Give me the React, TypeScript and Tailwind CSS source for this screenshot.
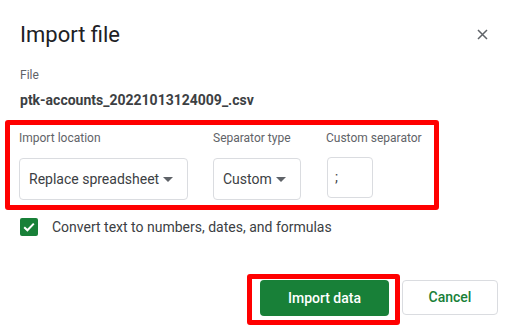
import React from "react";

const Caret: React.FC = () => (
  <svg width="10" height="5" viewBox="0 0 10 5" className="shrink-0">
    <path d="M0 0h10L5 5z" fill="#5f6368" />
  </svg>
);

const Field: React.FC<{ label: string; children: React.ReactNode }> = ({ label, children }) => (
  <div className="flex flex-col">
    <span className="text-[12px] leading-4 text-[#5f6368] whitespace-nowrap">{label}</span>
    <div className="mt-[12px]">{children}</div>
  </div>
);

const App: React.FC = () => {
  return (
    <div className="w-[524px] h-[336px] bg-white overflow-hidden font-['Roboto',sans-serif] flex flex-col">
      {/* header */}
      <div className="flex items-start justify-between pl-5 pr-[36px] pt-[21px]">
        <h1 className="text-[22px] leading-7 text-[#202124]">Import file</h1>
        <svg width="11" height="11" viewBox="0 0 11 11" className="mt-[8px]">
          <path d="M1 1l9 9M10 1l-9 9" stroke="#5f6368" strokeWidth="1.5" />
        </svg>
      </div>

      <div className="pl-5 mt-[18px] text-[12px] leading-4 text-[#5f6368]">File</div>
      <div className="pl-5 mt-[7px] text-[14px] leading-5 font-bold text-[#3c4043]">
        ptk-accounts_20221013124009_.csv
      </div>

      {/* import options */}
      <div className="ml-[5px] mt-[10px] w-[434px] h-[90px] border-[5px] border-[#ff0000] rounded-[3px] flex gap-[25px] pl-[9px] pt-[5px]">
        <Field label="Import location">
          <div className="w-[169px] h-[42px] border border-[#dadce0] rounded-[4px] flex items-center justify-between pl-[9px] pr-[14px] text-[14px] text-[#3c4043] whitespace-nowrap">
            <span>Replace spreadsheet</span>
            <Caret />
          </div>
        </Field>
        <Field label="Separator type">
          <div className="w-[88px] h-[42px] border border-[#dadce0] rounded-[4px] flex items-center justify-between pl-[9px] pr-[14px] text-[14px] text-[#3c4043] whitespace-nowrap">
            <span>Custom</span>
            <Caret />
          </div>
        </Field>
        <Field label="Custom separator">
          <div className="ml-[1px] -mt-[1px] w-[46px] h-[41px] border border-[#dadce0] rounded-[4px] flex items-center pl-[7px] text-[14px] text-[#3c4043]">
            ;
          </div>
        </Field>
      </div>

      {/* checkbox */}
      <div className="flex items-center pl-5 mt-[7px]">
        <div className="w-[18px] h-[18px] rounded-[2px] bg-[#188038] flex items-center justify-center">
          <svg width="12" height="10" viewBox="0 0 12 10">
            <path d="M1.2 5.2l3.2 3.1L10.8 1.6" stroke="white" strokeWidth="2" fill="none" />
          </svg>
        </div>
        <span className="ml-[14px] text-[14px] leading-5 text-[#3c4043]">
          Convert text to numbers, dates, and formulas
        </span>
      </div>

      {/* actions */}
      <div className="flex items-start justify-end pr-[26px] mt-[37px]">
        <div className="w-[153px] h-[51px] border-[5px] border-[#ff0000] rounded-[3px] pl-[8px] pt-[1px]">
          <button className="w-[129px] h-[36px] rounded-[4px] bg-[#188038] text-white text-[14px] font-medium">
            Import data
          </button>
        </div>
        <button className="ml-[2px] mt-[6px] w-[96px] h-[35px] rounded-[4px] border border-[#dadce0] bg-white text-[#188038] text-[14px] font-medium">
          Cancel
        </button>
      </div>
    </div>
  );
};

export default App;
